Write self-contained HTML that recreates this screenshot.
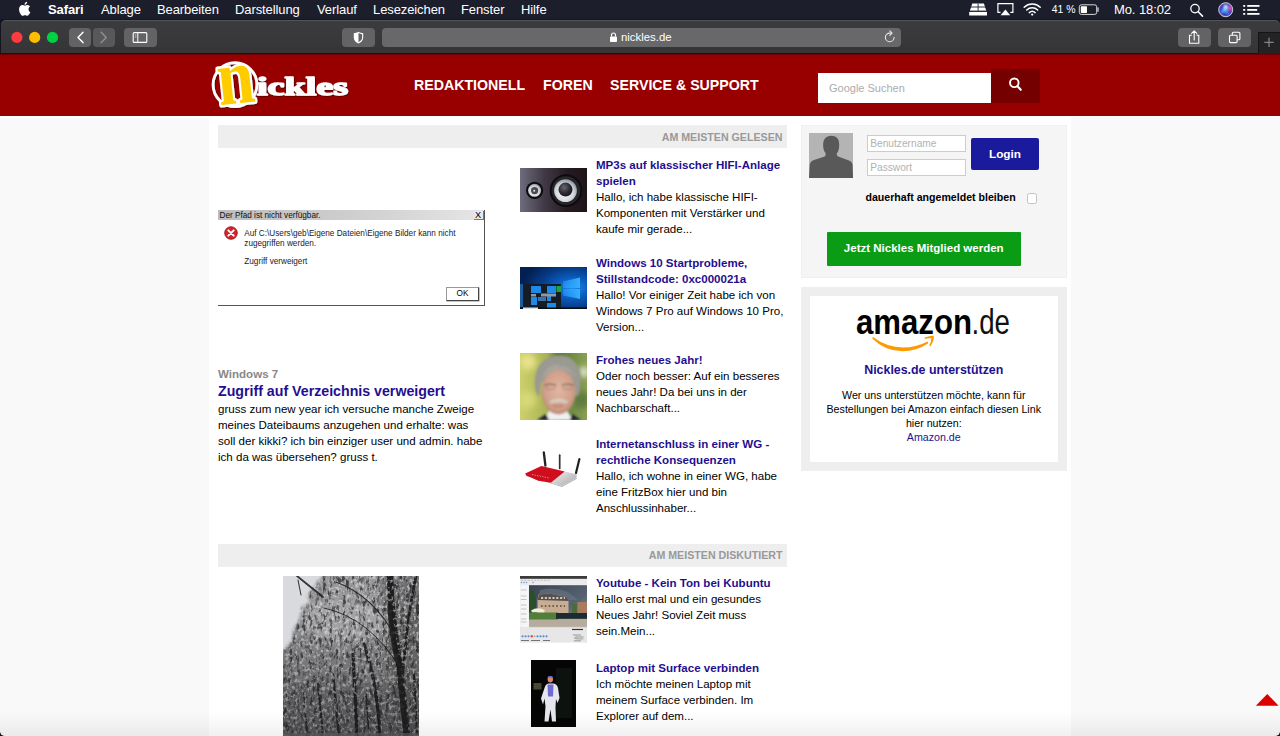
<!DOCTYPE html>
<html lang="de">
<head>
<meta charset="utf-8">
<title>nickles.de</title>
<style>
*{box-sizing:border-box;margin:0;padding:0}
html,body{width:1280px;height:736px;overflow:hidden;background:#fff;font-family:"Liberation Sans",Arial,sans-serif;font-size:11.55px;line-height:16px;color:#000}
.abs{position:absolute}
#menubar{position:absolute;left:0;top:0;width:1280px;height:20px;background:#1c1e2b;color:#fff;font-size:13px;line-height:19px;white-space:nowrap;letter-spacing:-0.1px}
#menubar span{position:absolute;top:0}
#toolbar{position:absolute;left:0.5px;top:20px;width:1279px;height:33.3px;background:linear-gradient(#3c3c3f,#353538);border-top:1px solid #555558;border-radius:5px 5px 0 0}
.tbtn{position:absolute;top:28px;height:19px;background:#636366;border-radius:4px}
#header{position:absolute;left:0;top:54px;width:1280px;height:62.300px;background:#980000;border-top:1px solid #6d0000}
#side-l{position:absolute;left:0;top:117.700px;width:208.800px;height:619px;background:#f9f9f9}
#side-r{position:absolute;left:1071px;top:116.500px;width:209px;height:620px;background:#f9f9f9}
.nav{position:absolute;top:76px;color:#fff;font-weight:bold;font-size:14.2px;line-height:18px;white-space:nowrap}
.bar{position:absolute;left:218px;width:569px;height:23px;background:#eee;color:#999;font-weight:bold;font-size:10.67px;line-height:24px;text-align:right;padding-right:4.500px}
.item{position:absolute;left:596px;width:200px;font-size:11.55px;line-height:16px;white-space:nowrap}
.item b,.lnk{color:#1f0f8f}
.item b{display:block}
.th{position:absolute;overflow:hidden}
</style>
</head>
<body>
<div id="menubar">
<span style="left:48px;font-weight:bold">Safari</span>
<span style="left:101px">Ablage</span>
<span style="left:157px">Bearbeiten</span>
<span style="left:235px">Darstellung</span>
<span style="left:317px">Verlauf</span>
<span style="left:373px">Lesezeichen</span>
<span style="left:461px">Fenster</span>
<span style="left:521px">Hilfe</span>
<span style="left:1051.800px;font-size:10.400px;letter-spacing:0">41 %</span>
<span style="left:1114px">Mo. 18:02</span>
</div>
<div class="abs" style="left:0;top:19px;width:1280px;height:36px;background:#141520"></div>
<div id="toolbar"></div>
<div id="header"></div>
<div id="side-l"></div>
<div id="side-r"></div>

<!-- toolbar buttons -->
<div class="tbtn" style="left:69.300px;width:22.200px"></div>
<div class="tbtn" style="left:92.800px;width:22.200px;background:#58585b"></div>
<div class="tbtn" style="left:124px;width:33px"></div>
<div class="tbtn" style="left:342px;width:33px"></div>
<div class="tbtn" style="left:382px;width:519px;background:#68686b;color:#fff;font-size:11.4px;line-height:19.600px;padding-left:239px">nickles.de</div>
<div class="tbtn" style="left:1178px;width:33px"></div>
<div class="tbtn" style="left:1218px;width:33px"></div>
<div class="abs" style="left:1258px;top:32px;width:22px;height:22px;background:#232325;border-top:1px solid #151516;border-left:1px solid #151516"></div>


<!-- chrome icons -->
<svg class="abs" style="left:0;top:0" width="1280" height="54" viewBox="0 0 1280 54" fill="none">
 <!-- apple -->
 <path fill="#fff" transform="translate(3.4 -.37) scale(.86 .9)" d="M27.9 6.1c-1 0-2.1.6-2.8.6-.8 0-1.800-.6-2.900-.6-2 0-4 1.600-4 4.700 0 1.900.7 3.900 1.700 5.200.8 1.100 1.500 2 2.500 2s1.400-.6 2.700-.6c1.200 0 1.500.6 2.600.6s1.800-1 2.500-1.900c.8-1.100 1.100-2.200 1.100-2.300-.1 0-2.100-.8-2.100-3.100 0-2 1.600-2.900 1.700-3-.9-1.400-2.400-1.600-3-1.600zM26.800 4.700c.5-.6.900-1.500.800-2.400-.8 0-1.700.5-2.300 1.200-.5.600-.9 1.400-.8 2.300.9.100 1.800-.4 2.300-1.100z"/>
 <!-- tray icon -->
 <path fill="#fff" d="M972.300 3.500h11.600l2.400 7.300h-16.400zM969.200 11.800h17.800v3.600h-17.800z"/>
 <path stroke="#1c1e2b" stroke-width="0.9" d="M978.100 3.500v7.300M970.500 7h15.500M969 11.300h18"/>
 <!-- airplay -->
 <path stroke="#fff" stroke-width="1.200" d="M1000.500 12.300h-2.600v-8.600h15v8.600h-2.600"/>
 <path fill="#fff" d="M1005.400 9.500l4.800 5.800h-9.600z"/>
 <!-- wifi -->
 <g stroke="#fff" stroke-width="1.500" stroke-linecap="round">
  <path d="M1024.200 7.300a11.500 11.500 0 0 1 16 0"/>
  <path d="M1026.700 10a8 8 0 0 1 11 0"/>
  <path d="M1029.300 12.600a4.300 4.300 0 0 1 5.800 0"/>
 </g>
 <circle cx="1032.200" cy="14.600" r="1.100" fill="#fff"/>
 <!-- battery -->
 <rect x="1079.300" y="4.800" width="17.400" height="9.600" rx="2" stroke="#d8d8d8" stroke-width="1"/>
 <rect x="1080.800" y="6.300" width="6.200" height="6.600" rx=".6" fill="#fff"/>
 <path d="M1098 8v3.200" stroke="#d8d8d8" stroke-width="1.300" stroke-linecap="round"/>
 <!-- spotlight -->
 <circle cx="1195" cy="8.600" r="4.200" stroke="#fff" stroke-width="1.300"/>
 <path d="M1198.200 11.800l4.300 4.300" stroke="#fff" stroke-width="1.500" stroke-linecap="round"/>
 <!-- siri -->
 <defs>
  <radialGradient id="siri" cx="0.5" cy="0.5" r="0.5">
   <stop offset="0" stop-color="#5a6be0"/><stop offset="0.700" stop-color="#3b3fb8"/><stop offset="1" stop-color="#7a3fc0"/>
  </radialGradient>
  <filter id="sbl" x="-30%" y="-30%" width="160%" height="160%"><feGaussianBlur stdDeviation="1"/></filter>
  <clipPath id="scl"><circle cx="1225.700" cy="9.700" r="6.600"/></clipPath>
 </defs>
 <circle cx="1225.700" cy="9.700" r="7" fill="url(#siri)" stroke="#dcdcf2" stroke-width=".9"/>
 <g clip-path="url(#scl)"><g filter="url(#sbl)">
  <path d="M1220 14l4.500-8 2 4z" fill="#38d0ff"/>
  <path d="M1223.500 5l2.500 5.500 2-5.500z" fill="#d8fbff"/>
  <path d="M1227 9l4-4 1.500 6z" fill="#ff4fb0"/>
  <path d="M1224 12l3-2 3 5z" fill="#4a8cff"/>
 </g></g>
 <!-- listicon -->
 <g fill="#fff"><rect x="1243.200" y="5" width="2" height="1.800"/><rect x="1243.200" y="9" width="2" height="1.800"/><rect x="1243.200" y="13" width="2" height="1.800"/>
 <rect x="1247.200" y="5" width="12.300" height="1.800"/><rect x="1247.200" y="9" width="10" height="1.800"/><rect x="1247.200" y="13" width="12.300" height="1.800"/></g>
 <!-- traffic lights -->
 <circle cx="16.900" cy="37.400" r="5.600" fill="#fe3b40"/>
 <circle cx="34.700" cy="37.400" r="5.600" fill="#fdbd00"/>
 <circle cx="52.500" cy="37.400" r="5.600" fill="#00d243"/>
 <!-- back/forward -->
 <path d="M83 32.200l-5 5.200 5 5.200" stroke="#fff" stroke-width="1.500" stroke-linecap="round" stroke-linejoin="round"/>
 <path d="M101.200 32.200l5 5.200-5 5.200" stroke="#8f8f92" stroke-width="1.500" stroke-linecap="round" stroke-linejoin="round"/>
 <!-- sidebar icon -->
 <rect x="133.200" y="32.600" width="13.600" height="9.800" rx="1" stroke="#fff" stroke-width="1.100"/>
 <path d="M137.800 32.600v9.800" stroke="#fff" stroke-width="1"/>
 <path d="M134.800 35h1.600M134.800 37h1.600" stroke="#fff" stroke-width=".7"/>
 <!-- shield -->
 <path d="M358.500 31.800c1.800 1 3.300 1.300 4.700 1.400v4.600c0 2.700-2 4.500-4.700 5.600-2.700-1.100-4.700-2.900-4.700-5.600v-4.600c1.400-.1 2.900-.4 4.700-1.400z" fill="#fff"/>
 <path d="M358.500 33.100c1.400.7 2.500 1 3.600 1.100v3.600c0 2-1.500 3.500-3.600 4.400z" fill="#636366"/>
 <!-- lock -->
 <rect x="610" y="36.500" width="7" height="5.500" rx=".8" fill="#fff"/>
 <path d="M611.500 36.500v-1.500a2 2 0 0 1 4 0v1.500" stroke="#fff" stroke-width="1.100"/>
 <!-- reload -->
 <path d="M894 37.400a4.300 4.300 0 1 1-4.300-4.300h1.500" stroke="#e6e6e6" stroke-width="1.100" stroke-linecap="round"/>
 <path d="M889.800 30.800l2.300 2.300-2.300 2.300" stroke="#e6e6e6" stroke-width="1.100" stroke-linecap="round" stroke-linejoin="round"/>
 <!-- share -->
 <path d="M1191.800 35.200h-2.300v8h9.300v-8h-2.300" stroke="#fff" stroke-width="1.100" stroke-linejoin="round"/>
 <path d="M1194.200 40v-8.800M1191.600 33.400l2.600-2.600 2.600 2.600" stroke="#fff" stroke-width="1.100" stroke-linecap="round" stroke-linejoin="round"/>
 <!-- tabs -->
 <rect x="1229.500" y="35.300" width="7.600" height="7.300" rx="1" stroke="#fff" stroke-width="1.100"/>
 <path d="M1232.300 35v-1.700a1 1 0 0 1 1-1h5.600a1 1 0 0 1 1 1v5.500a1 1 0 0 1-1 1h-1.600" stroke="#fff" stroke-width="1.100"/>
 <!-- plus -->
 <path d="M1264.300 42.300h9.400M1269 37.600v9.400" stroke="#9a9a9c" stroke-width="1"/>
</svg>

<!-- logo -->
<svg class="abs" style="left:200px;top:55px" width="160" height="61" viewBox="200 55 160 61">
 <defs><filter id="lsh" x="-10%" y="-10%" width="120%" height="120%"><feDropShadow dx=".7" dy=".8" stdDeviation=".6" flood-color="#3a0000" flood-opacity=".8"/></filter></defs>
 <g filter="url(#lsh)">
 <circle cx="235" cy="84.700" r="21.900" fill="none" stroke="#fff" stroke-width="2.900"/>
 <text x="257" y="94.700" font-family="'Liberation Serif',serif" font-weight="bold" font-size="24.500" fill="#fff" stroke="#fff" stroke-width="1.500" stroke-linejoin="round" textLength="91" lengthAdjust="spacingAndGlyphs">ickles</text>
 <g transform="rotate(-6 236 85)">
 <text x="217.500" y="103.500" font-family="'Liberation Serif',serif" font-weight="bold" font-size="79" fill="#ffcc00" stroke="#fff" stroke-width="5" paint-order="stroke" stroke-linejoin="round" textLength="37" lengthAdjust="spacingAndGlyphs">n</text>
 </g>
 </g>
</svg>
<div class="nav" style="left:414px">REDAKTIONELL</div>
<div class="nav" style="left:543px">FOREN</div>
<div class="nav" style="left:610px">SERVICE &amp; SUPPORT</div>

<!-- search -->
<div class="abs" style="left:991px;top:68.500px;width:49px;height:34.500px;background:#750000;border-radius:1.500px"></div>
<svg class="abs" style="left:1005px;top:74px" width="20" height="20" viewBox="1005 74 20 20" fill="none"><circle cx="1014.300" cy="82.800" r="4.300" stroke="#fff" stroke-width="1.900"/><path d="M1017.500 86.200l3.300 3.600" stroke="#fff" stroke-width="2.100" stroke-linecap="round"/></svg>
<div class="abs" style="left:818px;top:73px;width:173px;height:30px;background:#fff;color:#acacac;font-size:11px;line-height:30px;padding-left:11px">Google Suchen</div>

<div class="bar" style="top:125.300px">AM MEISTEN GELESEN</div>
<div class="bar" style="top:543.700px;line-height:22.600px">AM MEISTEN DISKUTIERT</div>

<!-- main article -->
<div class="abs" style="left:218px;top:365.5px;font-weight:bold;color:#888">Windows 7</div>
<div class="abs" style="left:218px;top:382px;font-weight:bold;color:#1f0f8f;font-size:14.2px;line-height:18px;white-space:nowrap">Zugriff auf Verzeichnis verweigert</div>
<div class="abs" style="left:218px;top:401.200px;white-space:nowrap">gruss zum new year ich versuche manche Zweige<br>meines Dateibaums anzugehen und erhalte: was<br>soll der kikki? ich bin einziger user und admin. habe<br>ich da was übersehen? gruss t.</div>


<!-- dialog image -->
<div class="abs" style="left:218px;top:210px;width:267px;height:96px;background:#fff;border-right:1px solid #555;border-bottom:1px solid #555;font-size:8.200px;line-height:10px;color:#222;white-space:nowrap">
 <div class="abs" style="left:0;top:0;width:266px;height:9.500px;background:linear-gradient(90deg,#bdbdbd,#d2d2d2 60%,#e6e6e6);color:#111;line-height:11px;padding-left:1.500px">Der Pfad ist nicht verfügbar.</div>
 <div class="abs" style="left:255.500px;top:.5px;width:10px;height:9px;border-right:1px solid #777;border-bottom:1px solid #777;background:#e9e9e9;font-size:9.200px;line-height:9px;text-align:center;color:#000">X</div>
 <svg class="abs" style="left:6px;top:16px" width="14" height="14" viewBox="0 0 14 14"><circle cx="7" cy="7" r="6.300" fill="#d3242c" stroke="#8e1218" stroke-width=".8"/><path d="M4.300 4.300l5.400 5.400M9.700 4.300l-5.400 5.400" stroke="#fff" stroke-width="1.900" stroke-linecap="round"/></svg>
 <div class="abs" style="left:26.300px;top:18.600px">Auf C:\Users\geb\Eigene Dateien\Eigene Bilder kann nicht<br>zugegriffen werden.</div>
 <div class="abs" style="left:26.300px;top:47px">Zugriff verweigert</div>
 <div class="abs" style="left:228px;top:77px;width:33px;height:13.500px;border:1px solid #999;border-right-color:#444;border-bottom-color:#444;box-shadow:.5px .5px 0 #888;font-size:8.200px;line-height:12px;text-align:center;color:#000">OK</div>
</div>
<!-- list -->
<div class="item" style="top:156.5px"><b>MP3s auf klassischer HIFI-Anlage<br>spielen</b>Hallo, ich habe klassische HIFI-<br>Komponenten mit Verstärker und<br>kaufe mir gerade...</div>
<div class="item" style="top:254.5px"><b>Windows 10 Startprobleme,<br>Stillstandcode: 0xc000021a</b>Hallo! Vor einiger Zeit habe ich von<br>Windows 7 Pro auf Windows 10 Pro,<br>Version...</div>
<div class="item" style="top:352.100px"><b>Frohes neues Jahr!</b>Oder noch besser: Auf ein besseres<br>neues Jahr! Da bei uns in der<br>Nachbarschaft...</div>
<div class="item" style="top:436.300px"><b>Internetanschluss in einer WG -<br>rechtliche Konsequenzen</b>Hallo, ich wohne in einer WG, habe<br>eine FritzBox hier und bin<br>Anschlussinhaber...</div>
<div class="item" style="top:575px"><b>Youtube - Kein Ton bei Kubuntu</b>Hallo erst mal und ein gesundes<br>Neues Jahr! Soviel Zeit muss<br>sein.Mein...</div>
<div class="item" style="top:659.5px"><b>Laptop mit Surface verbinden</b>Ich möchte meinen Laptop mit<br>meinem Surface verbinden. Im<br>Explorer auf dem...</div>

<!-- thumbs -->
<!-- speaker -->
<svg class="abs" style="left:520px;top:168px" width="67" height="44" viewBox="520 168 67 44">
 <defs>
  <linearGradient id="spbg" x1="0" x2="1" y1="0" y2="0"><stop offset="0" stop-color="#6f6c7e"/><stop offset=".35" stop-color="#423b47"/><stop offset=".7" stop-color="#251b20"/><stop offset="1" stop-color="#1d1418"/></linearGradient>
  <radialGradient id="spk" cx=".45" cy=".6" r=".6"><stop offset="0" stop-color="#fff"/><stop offset=".7" stop-color="#cfd3da"/><stop offset="1" stop-color="#8f949c"/></radialGradient>
  <radialGradient id="cone" cx=".4" cy=".35" r=".7"><stop offset="0" stop-color="#6a6770"/><stop offset=".6" stop-color="#2a2a30"/><stop offset="1" stop-color="#15151a"/></radialGradient>
 </defs>
 <rect x="520" y="168" width="67" height="44" fill="url(#spbg)"/>
 <circle cx="534.600" cy="190.300" r="8.600" fill="#0c0a0d"/>
 <circle cx="534.600" cy="190.300" r="6.500" fill="url(#spk)"/>
 <circle cx="534.600" cy="190.600" r="3.600" fill="#4a4a50"/>
 <circle cx="534.200" cy="190.800" r="1" fill="#e8e8e8"/>
 <circle cx="566" cy="190.600" r="16.300" fill="#0e0b0e"/>
 <circle cx="566" cy="190.600" r="14.300" fill="#26262b"/>
 <circle cx="565.500" cy="190.600" r="11.400" fill="url(#spk)"/>
 <circle cx="565.500" cy="189.600" r="7" fill="url(#cone)"/>
</svg>
<!-- windows 10 -->
<svg class="abs" style="left:520px;top:267px" width="67" height="42" viewBox="520 267 67 42">
 <defs><filter id="blw"><feGaussianBlur stdDeviation=".55"/></filter>
  <radialGradient id="w10" cx=".78" cy=".5" r=".75"><stop offset="0" stop-color="#1f8ff0"/><stop offset=".3" stop-color="#0c5fc2"/><stop offset=".65" stop-color="#063a86"/><stop offset="1" stop-color="#041f52"/></radialGradient>
  <linearGradient id="w10l" x1="0" x2="1"><stop offset="0" stop-color="#2aa4ff" stop-opacity=".5"/><stop offset="1" stop-color="#36b0ff"/></linearGradient>
 </defs>
 <rect x="520" y="267" width="67" height="42" fill="url(#w10)"/><g filter="url(#blw)">
 <path d="M563 281.500l17-4v10.500h-17zM563 289l17 0v10l-17-3.500z" fill="url(#w10l)"/>
 <rect x="520" y="284" width="41" height="24" fill="#141c26"/>
 <rect x="520" y="284" width="3" height="23" fill="#1c5c9a"/>
 <g fill="#1e8ae6"><rect x="531" y="286" width="10" height="7"/><rect x="547" y="286" width="9" height="7"/><rect x="531" y="297" width="6" height="8"/><rect x="547" y="296" width="4" height="5"/><rect x="547" y="303" width="9" height="5"/></g>
 <rect x="556.500" y="286" width="4.500" height="6" fill="#18a63a"/>
 <g fill="#8f99a5"><rect x="531" y="294" width="5" height="2.500"/><rect x="541" y="293.500" width="15" height="3"/></g>
 <rect x="538" y="297" width="8" height="4" fill="#3d73ad"/>
 <rect x="520" y="307.500" width="67" height="1.500" fill="#05080f"/>
 <rect x="523" y="307.500" width="15" height="1.500" fill="#dfe3e8"/></g>
</svg>
<!-- portrait -->
<svg class="abs" style="left:520px;top:353px" width="67" height="67" viewBox="520 353 67 67">
 <defs>
  <linearGradient id="pbg" x1="0" x2="1"><stop offset="0" stop-color="#cdd06a"/><stop offset=".4" stop-color="#a9b455"/><stop offset=".75" stop-color="#6f8a44"/><stop offset="1" stop-color="#8aa055"/></linearGradient>
  <radialGradient id="skin" cx=".5" cy=".45" r=".6"><stop offset="0" stop-color="#e3b7a2"/><stop offset=".7" stop-color="#d09f89"/><stop offset="1" stop-color="#b4826e"/></radialGradient>
  <filter id="bl" x="-20%" y="-20%" width="140%" height="140%"><feGaussianBlur stdDeviation=".9"/></filter>
  <filter id="bl2" x="-20%" y="-20%" width="140%" height="140%"><feGaussianBlur stdDeviation="3"/></filter>
 </defs>
 <rect x="520" y="353" width="67" height="67" fill="url(#pbg)"/>
 <g filter="url(#bl2)"><circle cx="528" cy="362" r="8" fill="#e9e28c"/><circle cx="527" cy="400" r="9" fill="#d6d878"/><circle cx="584" cy="372" r="5" fill="#eef0e0"/><circle cx="581" cy="400" r="9" fill="#5f7c3c"/><circle cx="560" cy="356" r="8" fill="#5f7c3c"/></g>
 <g filter="url(#bl)">
  <path d="M544 420l5-9h18l6 9z" fill="#f0f0f4"/>
  <path d="M537 420l9-6 3 6zM581 420l-9-6-2 6z" fill="#1c2233"/>
  <path d="M536 392c-3-14 0-28 12-34 8-4 20-3 26 3 7 7 8 20 5 33l-5 4-1-16-32 0-2 15z" fill="#9a9992"/>
  <ellipse cx="558.500" cy="392" rx="17" ry="22.500" fill="url(#skin)"/>
  <path d="M541 381c2-10 8-15 15-17 3 0 4 1 3 2.500 7-2.500 14 3.500 17 12.500-4-6-9-9-15.500-9.500-7 .5-14 4-19.500 11.500z" fill="#a8a59d"/>
  <path d="M544.500 385.500q6-2.500 11.500 0M562 385.500q6-2.500 11.500 0" stroke="#5a4438" stroke-width="1.200" fill="none"/>
  <path d="M545 388.500q5.500 1.500 11 0M562 388.500q5.500 1.500 11 0" stroke="#8a7a72" stroke-width=".7" fill="none"/>
  <path d="M549.500 401q9-5 18.500 0l-1 2.600q-8-3-16.500 0z" fill="#d5cfc0"/>
  <path d="M553 405.500q5 1.500 10 0" stroke="#a8655a" stroke-width="1.100" fill="none"/>
 </g>
</svg>
<!-- router -->
<svg class="abs" style="left:520px;top:440px" width="67" height="60" viewBox="520 440 67 60">
 <defs><linearGradient id="rg" x1="0" x2="1" y1="0" y2="1"><stop offset="0" stop-color="#f0f0f0"/><stop offset="1" stop-color="#a9a9ab"/></linearGradient>
 <filter id="bl3"><feGaussianBlur stdDeviation=".35"/></filter></defs>
 <g filter="url(#bl3)">
 <path d="M543.800 452.300l1.600 13.200" stroke="#222" stroke-width="2.300" stroke-linecap="round"/>
 <path d="M559.700 455.200v13.300" stroke="#333" stroke-width="1.700" stroke-linecap="round"/>
 <path d="M579.400 459l-3.400 14" stroke="#222" stroke-width="2.200" stroke-linecap="round"/>
 <path d="M526.2 475.5 L538.5 480.7 L550.9 482.8 L561.9 486.1 L576.6 478.1 L576.6 479.0 L561.9 487.1 L550.9 483.6 L526.2 476.2z" fill="#b4b4b6"/>
 <path d="M564.7 471.4 L576.6 474.2 L576.6 478.1 L561.9 486.1 L550.9 482.8z" fill="url(#rg)"/>
 <path d="M525.2 473.6 L541.4 466.0 L564.7 471.4 L550.9 482.8 L538.5 480.7 L526.2 475.5z" fill="#cf0a1d"/>
 <path d="M532 474.500l17 3.500" stroke="#f3b0b0" stroke-width=".8" stroke-dasharray="1.300 1.300"/>
 </g>
</svg>
<!-- kubuntu screenshot -->
<svg class="abs" style="left:520px;top:576px" width="67" height="67" viewBox="520 576 67 67">
 <defs>
  <linearGradient id="sky" x1="0" x2="1" y1="0" y2="1"><stop offset="0" stop-color="#39424f"/><stop offset=".6" stop-color="#566272"/><stop offset="1" stop-color="#8f9dad"/></linearGradient>
  <filter id="bl4"><feGaussianBlur stdDeviation=".6"/></filter>
 </defs>
 <rect x="520" y="576" width="67" height="66.600" fill="#e7e7e7"/>
 <rect x="520" y="576" width="67" height="2.900" fill="#3b3b3b"/>
 <rect x="520" y="578.900" width="67" height="6.300" fill="#ebebeb"/>
 <g fill="#5a8fd8" opacity=".8"><circle cx="521.500" cy="582.500" r=".8"/><circle cx="524" cy="582.500" r=".8"/><circle cx="526.500" cy="582.500" r=".8"/><circle cx="533" cy="582.500" r=".8"/></g>
 <path d="M521 580.300h30" stroke="#9a9a9a" stroke-width=".6" stroke-dasharray="2 1.300"/>
 <rect x="520.300" y="585.200" width="8.500" height="41.600" fill="#f6f6f6"/>
 <g stroke="#aeb6c0" stroke-width=".8" filter="url(#bl4)"><path d="M521 590h5.500M521 596h5.500M521 599.500h5.500M521 605h5.500M521 609h5.500M521 614h5.500M521 619h5.500M521 622h5.500"/></g>
 <g filter="url(#bl4)">
 <rect x="529" y="585.200" width="58" height="41.800" fill="url(#sky)"/>
 <path d="M540 590q14-4 28 2l10 8h-40z" fill="#6a7686" opacity=".6"/>
 <rect x="529" y="618.500" width="58" height="8.500" fill="#b6ac9d"/>
 <path d="M529 591q6-3 7 8v19h-7z" fill="#2c4f2a"/>
 <path d="M537.500 600l1-5.500 10-1 18 3.500 2 4v12.500h-31z" fill="#c9ad93"/>
 <path d="M537.500 600l1.500-5.500 10-1 17.500 3.500 2.500 4z" fill="#57504f"/>
 <path d="M541 598h24" stroke="#ece8e2" stroke-width="1.300" stroke-dasharray="2.200 1.600"/>
 <path d="M541 606h24" stroke="#6e5c54" stroke-width="2" stroke-dasharray="1.600 2.200"/>
 <path d="M577.500 602h9.500v11.500h-9.500z" fill="#a97b62"/>
 <path d="M572 604h5v9h-5z" fill="#4d6a3c"/>
 <path d="M529 612.500h29v7h-29z" fill="#4f7f38"/>
 <path d="M531 610.500q7-4.500 14 0l-1 1.800h-12z" fill="#efeed8"/>
 <path d="M556 613h31v5.800h-31z" fill="#1c2a30"/>
 </g>
 <rect x="529" y="626.800" width="58" height=".7" fill="#cfcfcf"/>
 <g fill="#4f8fe0"><circle cx="522.500" cy="636.300" r="1.100"/><circle cx="525.500" cy="636.300" r="1.100"/><circle cx="528.500" cy="636.300" r="1.100"/><circle cx="537.500" cy="636.300" r="1.100"/><circle cx="540.500" cy="636.300" r="1.100"/><circle cx="543.500" cy="636.300" r="1.100"/><circle cx="546.500" cy="636.300" r="1.100"/></g>
 <circle cx="531.800" cy="636.300" r="1.200" fill="#e2502e"/><circle cx="534.600" cy="636.300" r=".9" fill="#9aa"/>
 <path d="M521 640.500h8M531 640.500h9M543 640.500h7" stroke="#666" stroke-width=".9"/>
 <path d="M572 629.500h11" stroke="#333" stroke-width="1.200"/><path d="M573 635h8M574 638h8.500M574 640.800h7" stroke="#777" stroke-width=".7"/>
 <rect x="576" y="636.500" width="7" height="2.600" fill="none" stroke="#999" stroke-width=".5"/>
</svg>
<!-- dark figure -->
<svg class="abs" style="left:531px;top:660px" width="45" height="67" viewBox="531 660 45 67">
 <defs><filter id="bl5"><feGaussianBlur stdDeviation=".7"/></filter></defs>
 <rect x="531" y="660" width="45" height="67" fill="#050505"/>
 <rect x="533.500" y="683" width="8" height="6.500" fill="#5b5a3a" opacity=".8" filter="url(#bl5)"/>
 <path d="M556 668h16v50h-16z" fill="#0f1512" opacity=".8"/>
 <g filter="url(#bl5)">
  <path d="M544.500 688q1-4 4-4.500h5q3.500.5 4.500 4.500l1.500 10-2 5-1.500-4-.5 8 .5 14.500h-4l-1.500-12-2 12h-4l1-15-1-8-1.500 6-2-6z" fill="#e6e6ec"/>
  <path d="M547.500 684.500h6l-.5 12h-5z" fill="#6c6cd2"/>
  <ellipse cx="550.300" cy="679.300" rx="2.700" ry="3.300" fill="#d78868"/>
  <path d="M547.200 677.500q3-3.600 6.200 0z" fill="#3f6fd8"/>
 </g>
</svg>
<!-- snowy trees -->
<svg class="abs" style="left:283px;top:576px" width="136" height="160" viewBox="0 0 136 160">
 <defs>
  <linearGradient id="tov" x1="0" x2="0" y1="0" y2="1"><stop offset=".3" stop-color="#333" stop-opacity="0"/><stop offset="1" stop-color="#333" stop-opacity=".3"/></linearGradient><linearGradient id="tbg" x1="0" x2="0" y1="0" y2="1"><stop offset="0" stop-color="#9c9c9f"/><stop offset=".5" stop-color="#828284"/><stop offset="1" stop-color="#666668"/></linearGradient>
  <filter id="tn" x="0" y="0" width="100%" height="100%">
   <feTurbulence type="fractalNoise" baseFrequency=".33 .27" numOctaves="3" seed="11" result="n"/>
   <feColorMatrix in="n" type="matrix" values="0 0 0 0 0  0 0 0 0 0  0 0 0 0 0  3 3 0 0 -2.950" result="a"/>
   <feFlood flood-color="#e6e6ea"/><feComposite in2="a" operator="in"/><feGaussianBlur stdDeviation=".6"/>
  </filter>
  <filter id="tn2" x="0" y="0" width="100%" height="100%">
   <feTurbulence type="fractalNoise" baseFrequency=".3 .13" numOctaves="3" seed="5" result="n"/>
   <feColorMatrix in="n" type="matrix" values="0 0 0 0 0  0 0 0 0 0  0 0 0 0 0  3 0 3 0 -2.900" result="a"/>
   <feFlood flood-color="#1c1c1c"/><feComposite in2="a" operator="in"/><feGaussianBlur stdDeviation=".6"/>
  </filter>
  <filter id="bl6" x="-10%" y="-10%" width="120%" height="120%"><feGaussianBlur stdDeviation=".7"/></filter>
  <filter id="bl7" x="-10%" y="-10%" width="120%" height="120%"><feGaussianBlur stdDeviation="3"/></filter>
  <filter id="bl8" x="-10%" y="-10%" width="120%" height="120%"><feGaussianBlur stdDeviation="1.600"/></filter>
 </defs>
 <rect width="136" height="160" fill="url(#tbg)"/>
 <g filter="url(#bl7)">
  <path d="M95 -5h46v170h-30z" fill="#4a4a4c" opacity=".5"/>
  <path d="M-5 110h146v55h-146z" fill="#555557" opacity=".4"/>
  <ellipse cx="62" cy="45" rx="40" ry="22" fill="#b0b0b3" opacity=".6"/>
 </g>
 <g filter="url(#bl6)" stroke="#141414" fill="none" stroke-linecap="round" opacity=".9">
  <path d="M107 0q1 40 10 92l7 68" stroke-width="6.500"/>
  <path d="M120 98q3-50 13-98" stroke-width="2.600"/>
  <path d="M97 160q-2-50-16-92" stroke-width="3"/>
  <path d="M74 160q-2-40-4-82" stroke-width="3.200"/>
  <path d="M56 160l-6-62" stroke-width="2.400"/>
  <path d="M40 160l-5-52" stroke-width="2.200"/>
  <path d="M24 160l-3-42" stroke-width="1.800"/>
  <path d="M86 160l-3-42" stroke-width="1.800"/>
  <path d="M134 160l-3-62" stroke-width="2"/>
 </g>
 <rect width="136" height="160" filter="url(#tn2)" opacity=".7"/>
 <rect width="136" height="160" filter="url(#tn)" opacity=".55"/><rect width="136" height="160" fill="url(#tov)"/>
 <path d="M-4 -4h46l-11 14-7 10 3 6-8 5-3 14-5 7-3 14-12 12z" fill="#d9dade" filter="url(#bl8)"/>
 <g filter="url(#bl6)" stroke="#1a1a1a" fill="none" stroke-linecap="round" opacity=".85">
  <path d="M113 62q-22-42-60-56" stroke-width="1.300"/>
  <path d="M14 0q16 13 26 21" stroke-width="1.800"/>
  <path d="M15 4l3 15" stroke-width="1.100"/>
  <path d="M117 92q-30-50-76-60" stroke-width="1"/>
  <path d="M107 30q1 30 9 60l7 70" stroke-width="5"/><path d="M74 160q-1-20-2-40M97 160q-1-20-5-44" stroke-width="2.400"/>
 </g>
 <rect y="157" width="136" height="3" fill="#5a5a5c" opacity=".7"/>
</svg>
<!-- login box -->
<div class="abs" style="left:801px;top:125px;width:266px;height:153px;background:#f5f5f5;border:1px solid #f0f0f0"></div>
<svg class="abs" style="left:809px;top:133px" width="44" height="45" viewBox="809 133 44 45"><rect x="809" y="133" width="44" height="45" fill="#b4b4b4"/><path d="M809 178l.8-13.500q.6-3.400 4.200-4.500l10-3.200q2-.8 1.700-3.200c-2.500-3-2.900-7.200-2.400-11q1-6.600 8-6.800 7 .2 7.700 6.800c.5 4.500.1 8-2.200 11q-.5 2.400 2 3.200l9.500 3.400q3.700 1.300 4.200 4.300l.5 13.500z" fill="#595959"/></svg>
<div class="abs" style="left:867px;top:135px;width:99px;height:17px;background:#fff;border:1px solid #ccc;color:#b2b2b2;font-size:10.2px;line-height:15px;padding-left:2.200px">Benutzername</div>
<div class="abs" style="left:867px;top:159px;width:99px;height:17px;background:#fff;border:1px solid #ccc;color:#b2b2b2;font-size:10.2px;line-height:15px;padding-left:2.200px">Passwort</div>
<div class="abs" style="left:971px;top:137.5px;width:68px;height:32.5px;background:#1a1a9c;border-radius:2px;color:#fff;font-weight:bold;font-size:11.800px;line-height:32.500px;text-align:center">Login</div>
<div class="abs" style="left:865.5px;top:189px;font-weight:bold;font-size:10.6px;white-space:nowrap">dauerhaft angemeldet bleiben</div>
<div class="abs" style="left:1026.500px;top:193px;width:10.500px;height:10.500px;background:#fff;border:1px solid #c2c2c2;border-radius:2.500px"></div>
<div class="abs" style="left:826.5px;top:232px;width:194.5px;height:34px;background:#0a9c14;border-radius:1px;color:#fff;font-weight:bold;font-size:11.5px;line-height:33px;text-align:center">Jetzt Nickles Mitglied werden</div>

<!-- amazon box -->
<div class="abs" style="left:801px;top:287px;width:266px;height:183.5px;background:#eee"></div>
<div class="abs" style="left:809.5px;top:296px;width:248.5px;height:166px;background:#fff"></div>

<svg class="abs" style="left:850px;top:300px" width="170" height="56" viewBox="850 300 170 56">
 <text x="856" y="334.100" font-family="'Liberation Sans',sans-serif" font-weight="bold" font-size="35.500" fill="#000" textLength="116" lengthAdjust="spacingAndGlyphs">amazon</text>
 <text x="971.500" y="334.100" font-family="'Liberation Sans',sans-serif" font-size="35" fill="#111" textLength="38.500" lengthAdjust="spacingAndGlyphs">.de</text>
 <path d="M873 337q14 10.500 30 10.500 13 0 24.600-6l.8 1.800q-12 8-26 8-17 0-30.200-12.800z" fill="#f90"/>
 <path d="M924.500 337.500q5-1.800 9.300-1.700.6 4.500-3.300 10.400l-1.300-.7q2.200-4 2-7.300-3-.3-6.300.8z" fill="#f90"/>
</svg>
<div class="abs" style="left:809.5px;top:361.5px;width:248.5px;text-align:center;font-weight:bold;font-size:12.4px;color:#1f0f8f">Nickles.de unterstützen</div>
<div class="abs" style="left:809.5px;top:387.5px;width:248.5px;text-align:center;font-size:10.67px;line-height:14.2px;white-space:nowrap">Wer uns unterstützen möchte, kann für<br>Bestellungen bei Amazon einfach diesen Link<br>hier nutzen:<br><span class="lnk">Amazon.de</span></div>

<svg class="abs" style="left:1254px;top:692px" width="26" height="16" viewBox="1254 692 26 16"><path d="M1255.800 705.800l11.500-11.800 11.300 11.800z" fill="#dc0000"/></svg>
<div class="abs" style="left:0;top:712px;width:1280px;height:24px;background:linear-gradient(rgba(0,0,0,0),rgba(0,0,0,.06))"></div>
<div class="abs" style="left:0;top:732px;width:4px;height:4px;background:radial-gradient(circle at 100% 0,rgba(0,0,0,0) 3.4px,#14151f 4px)"></div>
<div class="abs" style="left:1276px;top:732px;width:4px;height:4px;background:radial-gradient(circle at 0 0,rgba(0,0,0,0) 3.4px,#14151f 4px)"></div>
</body>
</html>
